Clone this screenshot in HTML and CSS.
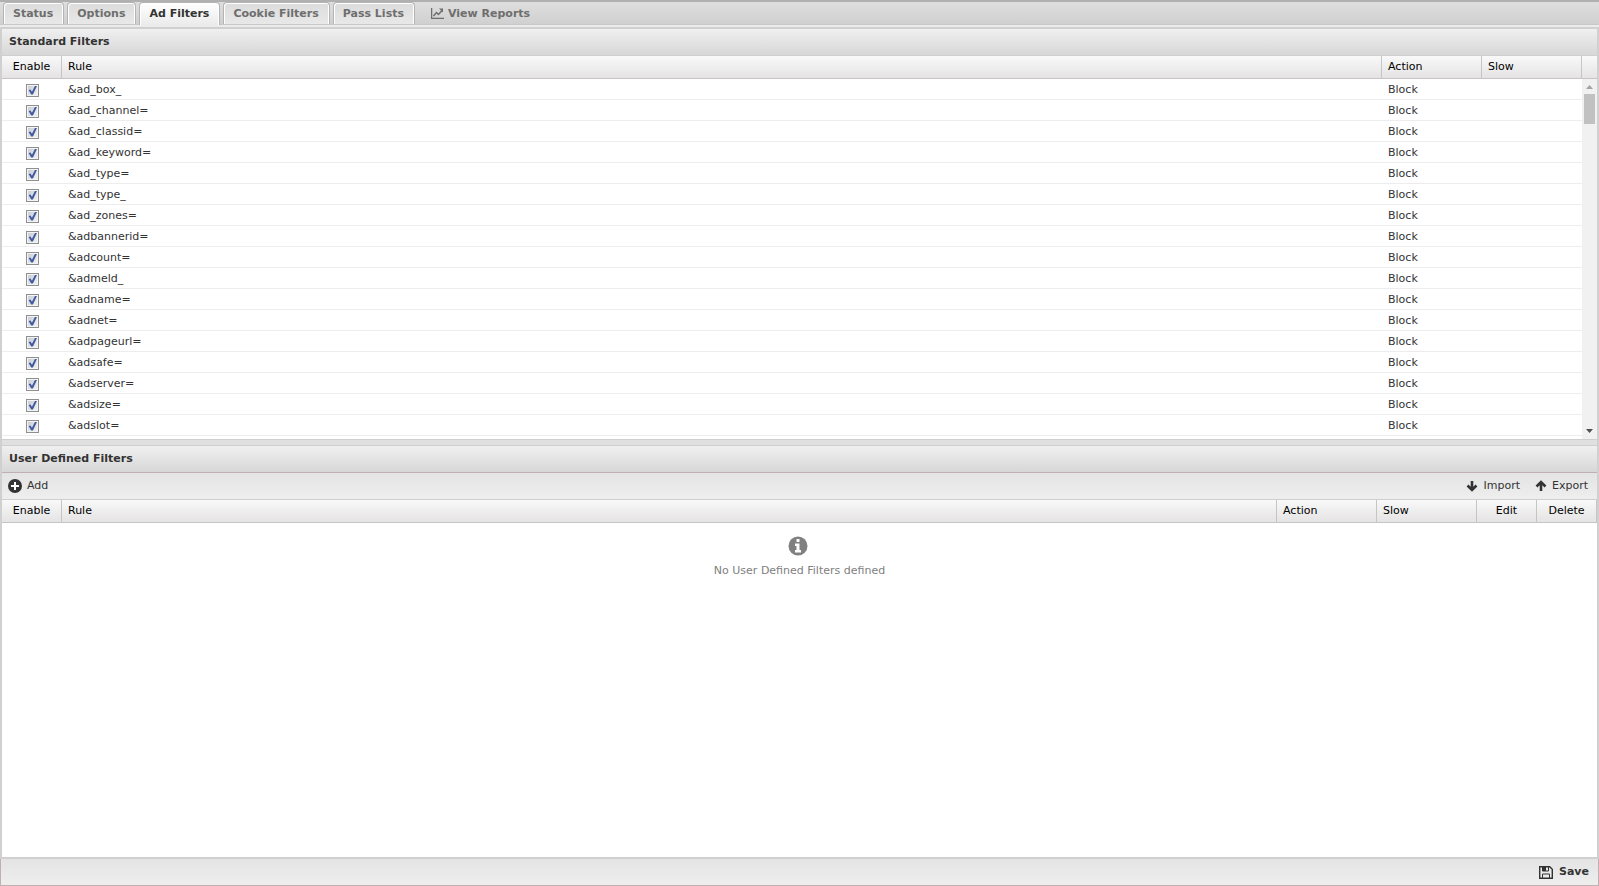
FILE: index.html
```
<!DOCTYPE html>
<html lang="en">
  <head>
    <meta charset="UTF-8" />
    <meta name="viewport" content="width=device-width, initial-scale=1.0" />
    <title>Ad Filters</title>
    <link rel="stylesheet" href="styles.css">
  </head>
  <body>
    <nav class="tabs">
      <button type="button" class="tab">Status</button>
      <button type="button" class="tab">Options</button>
      <button type="button" class="tab active">Ad Filters</button>
      <button type="button" class="tab">Cookie Filters</button>
      <button type="button" class="tab">Pass Lists</button>
      <button type="button" class="tab plain">
        <svg width="13" height="11" viewBox="0 0 13 11"><path d="M.5 0v10.5H13M2.5 8l3-3.500 2 2L11 2.500" fill="none" stroke="currentColor" stroke-width="1.5" /><path d="M8 0.500h4v4z" fill="currentColor" /></svg>
        View Reports
      </button>
    </nav>

    <main>
      <section class="panel">
        <h2>Standard Filters</h2>
        <div class="grid">
          <table>
            <thead>
              <tr>
                <th class="enable">Enable</th>
                <th>Rule</th>
                <th class="medium">Action</th>
                <th class="medium">Slow</th>
              </tr>
            </thead>
            <tbody id="rules"></tbody>
          </table>
          <div class="side">
            <div class="side-head"></div>
            <div class="scrollbar">
              <svg width="7" height="4" viewBox="0 0 7 4"><path d="M0 4L3.5 0 7 4z" fill="#a3a3a3" /></svg>
              <div class="thumb"></div>
              <svg class="down" width="7" height="4" viewBox="0 0 7 4"><path d="M0 0h7L3.5 4z" fill="#505050" /></svg>
            </div>
          </div>
        </div>
      </section>

      <div class="splitter"></div>

      <section class="panel user-panel">
        <h2>User Defined Filters</h2>
        <div class="toolbar">
          <button type="button">
            <svg width="14" height="14" viewBox="0 0 14 14"><circle cx="7" cy="7" r="7" fill="currentColor" /><path d="M7 3v8M3 7h8" stroke="#fff" stroke-width="2" /></svg>
            Add
          </button>
          <button type="button" class="right">
            <svg width="12" height="12" viewBox="0 0 12 12"><path d="M6 1v9M1.500 5.500L6 10l4.500-4.500" fill="none" stroke="currentColor" stroke-width="2.600" /></svg>
            Import
          </button>
          <button type="button">
            <svg width="12" height="12" viewBox="0 0 12 12"><path d="M6 11V2M1.500 6.500L6 2l4.500 4.500" fill="none" stroke="currentColor" stroke-width="2.600" /></svg>
            Export
          </button>
        </div>
        <table>
          <thead>
            <tr>
              <th class="enable">Enable</th>
              <th>Rule</th>
              <th class="medium">Action</th>
              <th class="medium">Slow</th>
              <th class="small">Edit</th>
              <th class="small">Delete</th>
            </tr>
          </thead>
        </table>
        <div class="empty">
          <svg width="24" height="20" viewBox="0 0 24 20"><circle cx="10" cy="10" r="9.500" fill="currentColor" /><path d="M8.500 3h3v3h-3zM7 7.500h4.500V14H13v2.500H7V14h1.500v-4H7z" fill="#fff" /></svg>
          <p>No User Defined Filters defined</p>
        </div>
      </section>
    </main>

    <footer>
      <button type="button">
        <svg width="14" height="13" viewBox="0 0 14 13"><path d="M.7.7h10l2.600 2.600v9H.7z" fill="none" stroke="currentColor" stroke-width="1.400" /><path d="M3.500 1v4h6V1M3.500 12V8h7v4" fill="none" stroke="currentColor" /><path d="M3 1h4v4H3z" fill="currentColor" /></svg>
        Save
      </button>
    </footer>

    <script>
      var rules = [
        '&ad_box_', '&ad_channel=', '&ad_classid=', '&ad_keyword=',
        '&ad_type=', '&ad_type_', '&ad_zones=', '&adbannerid=', '&adcount=',
        '&admeld_', '&adname=', '&adnet=', '&adpageurl=', '&adsafe=',
        '&adserver=', '&adsize=', '&adslot='
      ];
      var body = document.getElementById('rules');

      rules.forEach(function (rule, i) {
        var row = body.insertRow();
        var box = document.createElement('input');
        var label = document.createElement('label');
        box.type = 'checkbox';
        box.checked = true;
        box.id = 'rule-' + i;
        label.htmlFor = box.id;
        label.textContent = rule;

        var enable = row.insertCell();
        enable.className = 'enable';
        enable.appendChild(box);
        row.insertCell().appendChild(label);
        row.insertCell().textContent = 'Block';
        row.insertCell();
      });
    </script>
  </body>
</html>
```

FILE: styles.css
```
* {
  margin: 0;
  padding: 0;
  box-sizing: border-box;
}

body {
  display: flex;
  flex-direction: column;
  height: 100vh;
  overflow: hidden;
  font: 11px/14px 'DejaVu Sans', sans-serif;
  color: #333;
  background-color: #d0d0d0;
}

button {
  display: flex;
  align-items: center;
  border: none;
  background: none;
  font: inherit;
  color: inherit;
  white-space: nowrap;
}

.tabs {
  display: flex;
  gap: 3px;
  flex: none;
  height: 27px;
  padding: 0 3px;
  border-top: 2px solid #b0b0b0;
  background: linear-gradient(#dedede, #d0d0d0 22px, #c8c8c8 22px, #c8c8c8 23px, #ebebeb 23px);
}

.tab {
  height: 22px;
  padding: 0 10px 0 9px;
  border: 1px solid #b4b4b4;
  border-bottom: none;
  border-radius: 4px 4px 0 0;
  background: linear-gradient(#dcdcdc, #e8e8e8);
  box-shadow: inset 1px 1px #fff, inset -1px 0 #fff;
  font-weight: bold;
  color: #6e6e6e;
}

.tab.active {
  height: 23px;
  padding-bottom: 1px;
  background: linear-gradient(#fff, #ebebeb);
  color: #333;
}

.tab.plain {
  gap: 4px;
  padding: 0 12px;
  border-color: transparent;
  background: none;
  box-shadow: none;
}

main {
  display: flex;
  flex-direction: column;
  flex: 1;
  min-height: 0;
  padding: 2px;
}

.panel {
  display: flex;
  flex-direction: column;
  flex: 1 1 0;
  min-height: 0;
  background-color: #fff;
}

.user-panel {
  flex-basis: 1px;
}

h2 {
  flex: none;
  height: 27px;
  padding: 6px 7px;
  border-bottom: 1px solid #cfcfcf;
  background: linear-gradient(#f0f0f0, #d7d7d7);
  font-size: 11px;
}

.user-panel h2 {
  border-color: #c0b0b4;
}

.splitter {
  flex: none;
  height: 7px;
  border: 1px solid #cfcfcf;
  border-width: 1px 0;
  background-color: #e0e0e0;
}

.grid {
  display: flex;
  align-items: flex-start;
  flex: 1;
  min-height: 0;
  overflow: hidden;
}

table {
  width: 100%;
  border-collapse: separate;
  border-spacing: 0;
  table-layout: fixed;
}

th,
.side-head {
  height: 23px;
  border-bottom: 1px solid #c5c5c5;
  background: linear-gradient(#f9f9f9, #e5e3e3);
}

th {
  padding: 0 6px 1px;
  border-right: 1px solid #c5c5c5;
  font-weight: normal;
  text-align: left;
  color: #000;
}

th.enable,
th.small {
  width: 60px;
  padding: 0 0 1px;
  text-align: center;
}

th.medium {
  width: 100px;
}

td {
  height: 21px;
  padding: 1px 6px 0;
  border-bottom: 1px solid #ededed;
}

td.enable {
  padding: 3px 0 0 1px;
}

input {
  display: block;
  appearance: none;
  width: 13px;
  height: 13px;
  margin: 0 auto;
  border: 1px solid #8e8f8f;
  background: linear-gradient(135deg, #c5cbd3, #f4f4f4);
  box-shadow: inset 0 0 0 1px #f4f4f4;
}

input:checked::after {
  content: '';
  display: block;
  height: 11px;
  background-color: #4159a0;
  clip-path: polygon(15% 45%, 32% 40%, 45% 62%, 72% 10%, 90% 10%, 54% 86%, 38% 86%);
}

.side {
  display: flex;
  flex-direction: column;
  flex: none;
  align-self: stretch;
  width: 15px;
}

.side-head {
  flex: none;
}

.scrollbar {
  display: flex;
  flex-direction: column;
  align-items: center;
  flex: 1;
  padding: 6px 0;
  background-color: #f1f1f1;
}

.thumb {
  width: 11px;
  height: 30px;
  margin-top: 5px;
  background-color: #c1c1c1;
}

.down {
  margin-top: auto;
}

.toolbar {
  display: flex;
  gap: 15px;
  flex: none;
  height: 27px;
  padding: 0 9px 0 6px;
  border-bottom: 1px solid #cfcfcf;
  background: linear-gradient(#e4e4e4, #eee);
}

.toolbar button {
  gap: 5px;
}

.toolbar .right {
  margin-left: auto;
}

.empty {
  padding-top: 13px;
  text-align: center;
  color: #808080;
}

.empty svg {
  display: block;
  margin: 0 auto 8px;
}

footer {
  display: flex;
  justify-content: flex-end;
  flex: none;
  height: 27px;
  padding: 0 9px;
  border: 1px solid #c0b0b4;
  border-top: none;
  background: linear-gradient(#e4e4e4, #eee);
}

footer button {
  gap: 6px;
  font-weight: bold;
}
```
